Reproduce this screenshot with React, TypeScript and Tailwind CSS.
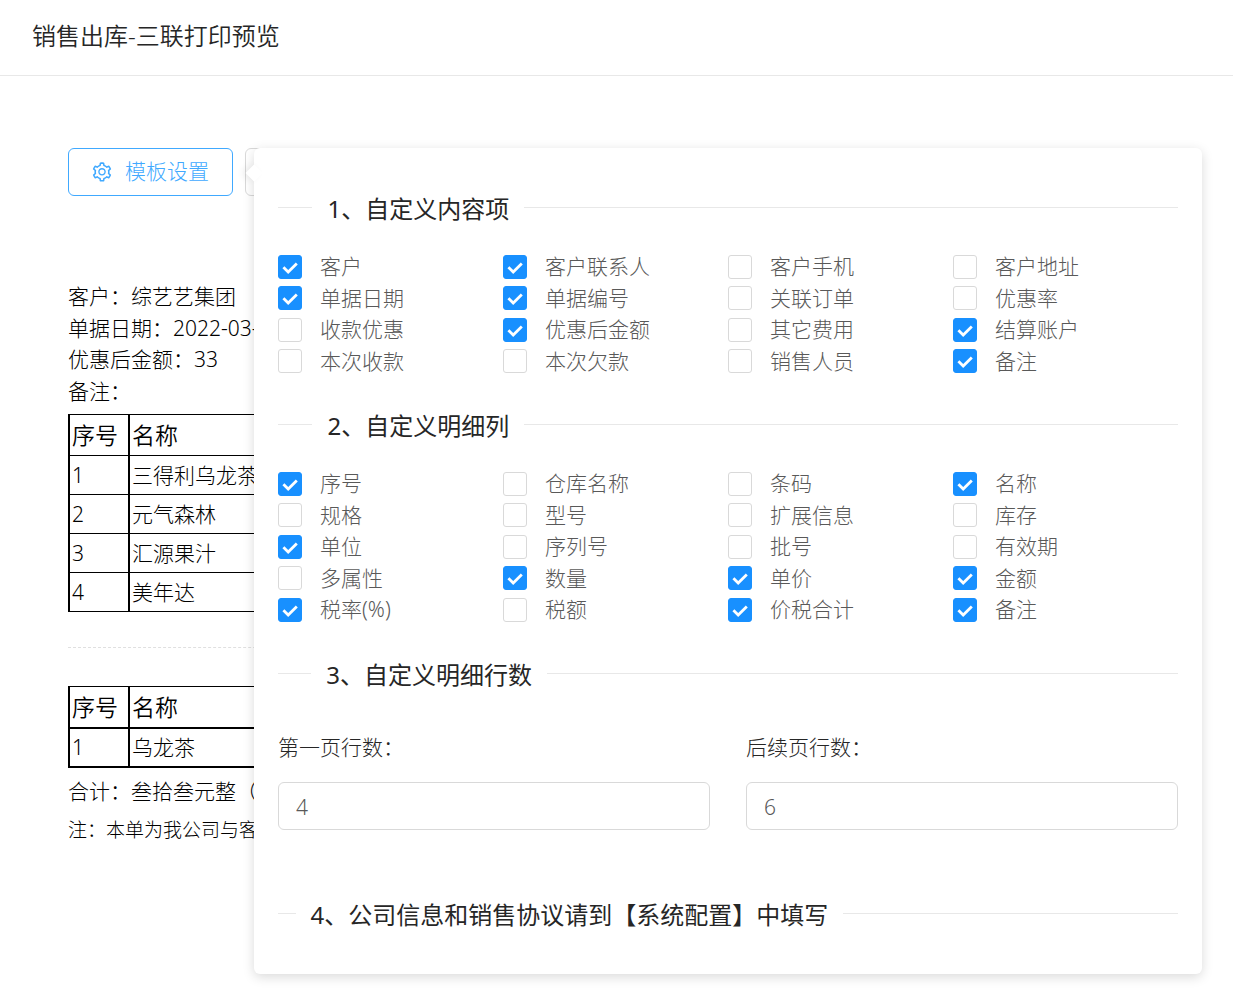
import React, { useState } from 'react';
import { AiOutlineSetting } from 'react-icons/ai';

interface Option {
  label: string;
  checked: boolean;
}

const contentOptions: Option[] = [
  { label: '客户', checked: true },
  { label: '客户联系人', checked: true },
  { label: '客户手机', checked: false },
  { label: '客户地址', checked: false },
  { label: '单据日期', checked: true },
  { label: '单据编号', checked: true },
  { label: '关联订单', checked: false },
  { label: '优惠率', checked: false },
  { label: '收款优惠', checked: false },
  { label: '优惠后金额', checked: true },
  { label: '其它费用', checked: false },
  { label: '结算账户', checked: true },
  { label: '本次收款', checked: false },
  { label: '本次欠款', checked: false },
  { label: '销售人员', checked: false },
  { label: '备注', checked: true },
];

const columnOptions: Option[] = [
  { label: '序号', checked: true },
  { label: '仓库名称', checked: false },
  { label: '条码', checked: false },
  { label: '名称', checked: true },
  { label: '规格', checked: false },
  { label: '型号', checked: false },
  { label: '扩展信息', checked: false },
  { label: '库存', checked: false },
  { label: '单位', checked: true },
  { label: '序列号', checked: false },
  { label: '批号', checked: false },
  { label: '有效期', checked: false },
  { label: '多属性', checked: false },
  { label: '数量', checked: true },
  { label: '单价', checked: true },
  { label: '金额', checked: true },
  { label: '税率(%)', checked: true },
  { label: '税额', checked: false },
  { label: '价税合计', checked: true },
  { label: '备注', checked: true },
];

const Divider: React.FC<{ title: string }> = ({ title }) => (
  <div className="flex h-9 items-center">
    <span className="h-px w-[5%] bg-[#e8e8e8]" />
    <h2 className="shrink-0 whitespace-nowrap px-[15px] pt-[3px] text-2xl font-normal leading-9 text-[#262626]">{title}</h2>
    <span className="h-px w-[95%] bg-[#e8e8e8]" />
  </div>
);

const CheckboxGrid: React.FC<{ options: Option[] }> = ({ options }) => {
  const [items, setItems] = useState(options);

  const toggle = (index: number) => {
    setItems((prev) => prev.map((item, i) => (i === index ? { ...item, checked: !item.checked } : item)));
  };

  return (
    <div className="grid grid-cols-4">
      {items.map((item, index) => (
        <label key={item.label} className="flex cursor-pointer items-center gap-[18px] text-[21px] leading-normal text-[#595959]">
          <span className="grid size-6 shrink-0">
            <input
              type="checkbox"
              checked={item.checked}
              onChange={() => toggle(index)}
              className="peer col-start-1 row-start-1 size-6 appearance-none rounded-[3px] border border-[#d9d9d9] bg-white checked:border-[#1890ff] checked:bg-[#1890ff]"
            />
            <svg
              viewBox="0 0 24 24"
              className="pointer-events-none invisible col-start-1 row-start-1 size-6 peer-checked:visible"
              fill="none"
              stroke="#fff"
              strokeWidth="2.8"
            >
              <path d="M5.4 12.2l4.8 4.8L18.8 8.6" />
            </svg>
          </span>
          <span>{item.label}</span>
        </label>
      ))}
    </div>
  );
};

const RowsField: React.FC<{ id: string; label: string; value: string }> = ({ id, label, value }) => (
  <div className="flex min-w-0 flex-1 flex-col">
    <label htmlFor={id} className="mb-[19px] text-[21px] leading-8 text-[#262626]">
      {label}
    </label>
    <input
      id={id}
      defaultValue={value}
      className="h-12 w-full rounded-md border border-[#d9d9d9] bg-white px-[17px] pt-0.5 text-[21px] text-[#595959] outline-none"
    />
  </div>
);

const SettingsPopover: React.FC = () => (
  <div className="absolute left-[186px] right-0 top-0 rounded-md bg-white px-6 pb-[42px] pt-[41px] shadow-[0_3px_12px_rgba(0,0,0,0.15)]">
    <span className="absolute -left-1.5 top-[19px] size-3 rotate-45 bg-white shadow-[-3px_3px_7px_rgba(0,0,0,0.07)]" />
    <Divider title="1、自定义内容项" />
    <div className="pb-[29px] pt-[26px]">
      <CheckboxGrid options={contentOptions} />
    </div>
    <Divider title="2、自定义明细列" />
    <div className="pb-[30px] pt-[26px]">
      <CheckboxGrid options={columnOptions} />
    </div>
    <Divider title="3、自定义明细行数" />
    <div className="flex gap-9 pb-[66px] pt-[39px]">
      <RowsField id="first-page-rows" label="第一页行数：" value="4" />
      <RowsField id="next-page-rows" label="后续页行数：" value="6" />
    </div>
    <Divider title="4、公司信息和销售协议请到【系统配置】中填写" />
  </div>
);

const App: React.FC = () => {
  const goods = ['三得利乌龙茶', '元气森林', '汇源果汁', '美年达'];

  return (
    <div className="min-h-screen bg-white font-['Noto_Sans','Noto_Sans_CJK_SC',sans-serif] font-light text-black">
      <header className="border-b border-[#e8e8e8] px-8 pb-[21px] pt-[18px]">
        <h1 className="text-2xl font-[350] leading-9 text-[#262626]">销售出库-三联打印预览</h1>
      </header>

      <main className="relative ml-[68px] mr-[31px] mt-[72px]">
        <div className="flex gap-3">
          <button className="flex h-12 items-center gap-3 rounded-md border border-[#40a9ff] pl-[22px] pr-[23px] text-[21px] text-[#40a9ff]">
            <AiOutlineSetting className="size-[22px]" />
            模板设置
          </button>
          <button aria-label="打印" className="h-12 w-24 rounded-md border border-[#d9d9d9]" />
        </div>

        <div className="mt-[85px] text-[21px] leading-normal">
          <p>客户：综艺艺集团</p>
          <p>单据日期：2022-03-</p>
          <p>优惠后金额：33</p>
          <p>备注：</p>
        </div>

        <table className="mt-[7px] w-full table-fixed border-collapse text-left text-[21px]">
          <thead>
            <tr className="h-[41px] text-[23px]">
              <th className="w-[60px] border border-x-2 border-black px-0.5 py-0 font-[350] leading-8">序号</th>
              <th className="border border-x-2 border-black px-0.5 py-0 font-[350] leading-8">名称</th>
            </tr>
          </thead>
          <tbody>
            {goods.map((name, index) => (
              <tr key={name} className="h-[39px]">
                <td className="border border-x-2 border-black px-0.5 py-0 leading-8">{index + 1}</td>
                <td className="border border-x-2 border-black px-0.5 py-0 leading-8">{name}</td>
              </tr>
            ))}
          </tbody>
        </table>

        <hr className="mb-[38px] mt-[35px] border-dashed border-[#e0e0e0]" />

        <table className="w-full table-fixed border-collapse text-left text-[21px]">
          <thead>
            <tr className="h-[41px] text-[23px]">
              <th className="w-[60px] border-2 border-t border-black px-0.5 py-0 font-[350] leading-8">序号</th>
              <th className="border-2 border-t border-black px-0.5 py-0 font-[350] leading-8">名称</th>
            </tr>
          </thead>
          <tbody>
            <tr className="h-[39px]">
              <td className="border-2 border-black px-0.5 py-0 leading-8">1</td>
              <td className="border-2 border-black px-0.5 py-0 leading-8">乌龙茶</td>
            </tr>
          </tbody>
        </table>

        <p className="mt-[7px] text-[21px] leading-8">合计：叁拾叁元整（</p>
        <p className="mt-[7px] text-[19px] leading-8">注：本单为我公司与客</p>

        <SettingsPopover />
      </main>
    </div>
  );
};

export default App;
